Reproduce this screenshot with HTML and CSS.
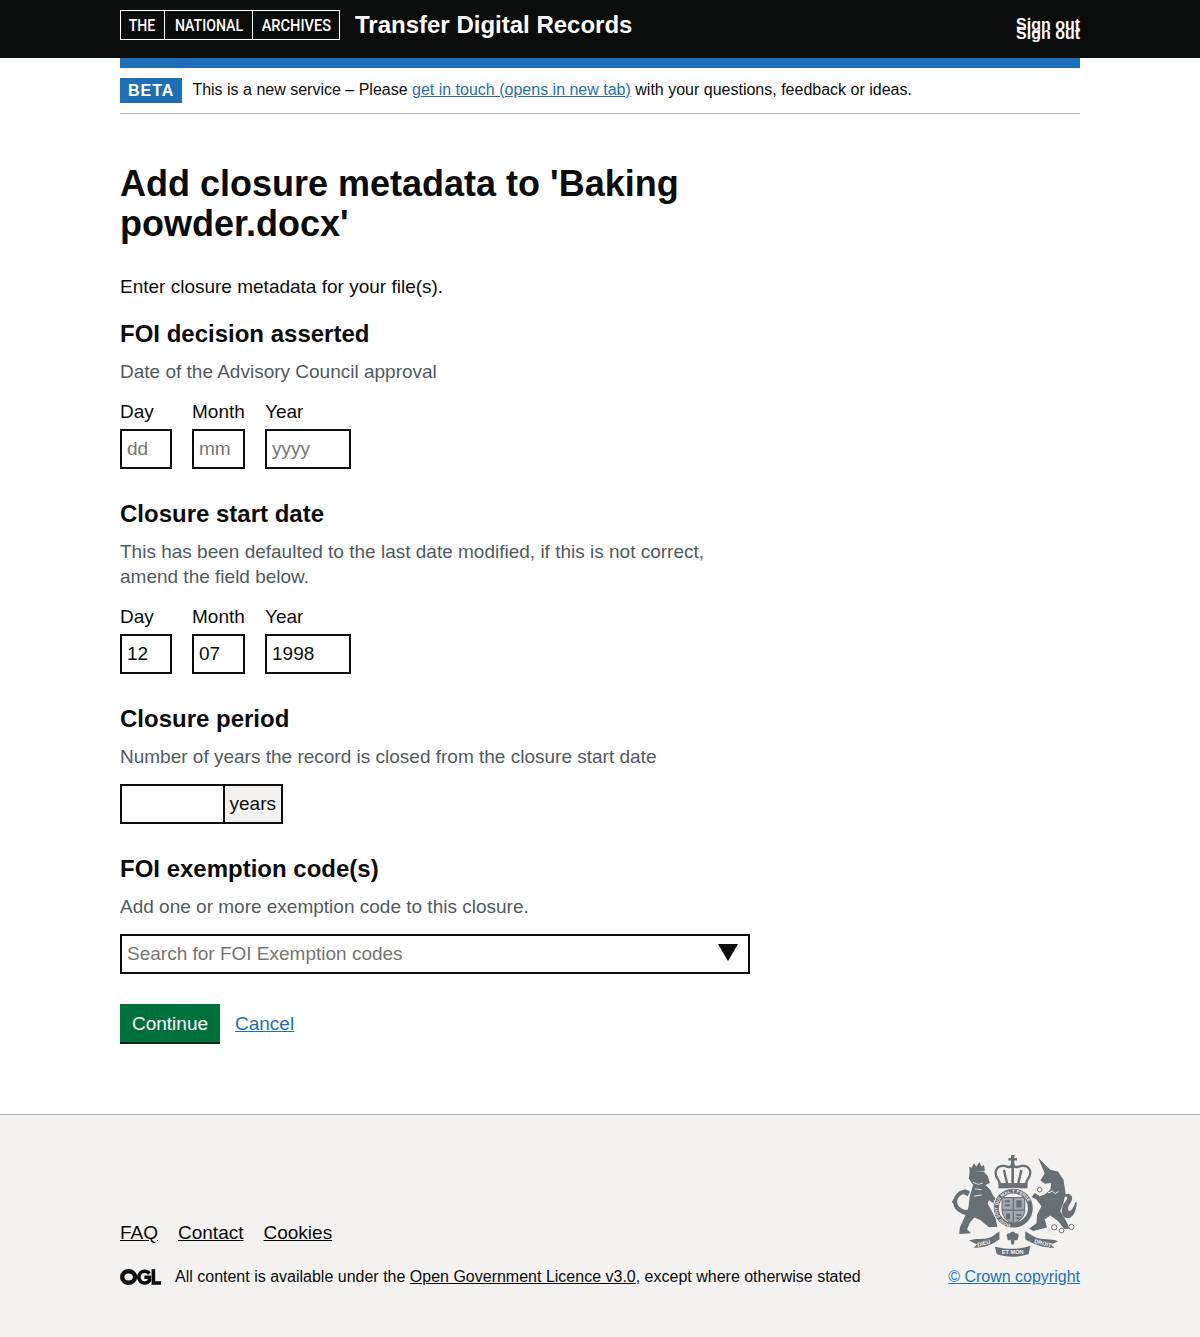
FILE: index.html
```html
<!DOCTYPE html>
<html lang="en">
<head>
<meta charset="utf-8">
<title>Add closure metadata</title>
<link rel="stylesheet" href="styles.css">
</head>
<body>
<header class="site-header">
  <div class="container header-inner">
    <div class="brand">
      <div class="tna-logo">
        <span class="tna-cell tna-the"><span class="tna-word">THE</span></span>
        <span class="tna-cell tna-national"><span class="tna-word">NATIONAL</span></span>
        <span class="tna-cell tna-archives"><span class="tna-word">ARCHIVES</span></span>
      </div>
      <a class="service-name" href="#">Transfer Digital Records</a>
    </div>
    <div class="sign-out">
      <a href="#">Sign out</a>
      <a href="#">Sign out</a>
    </div>
  </div>
</header>
<div class="container">
  <div class="blue-bar"></div>
  <div class="phase-banner">
    <strong class="tag">BETA</strong>
    <span class="phase-text">This is a new service – Please <a class="link" href="#">get in touch (opens in new tab)</a> with your questions, feedback or ideas.</span>
  </div>
  <main class="main">
    <h1 class="title">Add closure metadata to 'Baking powder.docx'</h1>
    <p class="lead">Enter closure metadata for your file(s).</p>
    <section class="group">
      <h2 class="legend">FOI decision asserted</h2>
      <p class="hint">Date of the Advisory Council approval</p>
      <div class="date-row">
        <label class="date-item date-day"><span class="label">Day</span><input class="input" placeholder="dd"></label>
        <label class="date-item date-month"><span class="label">Month</span><input class="input" placeholder="mm"></label>
        <label class="date-item date-year"><span class="label">Year</span><input class="input" placeholder="yyyy"></label>
      </div>
    </section>
    <section class="group">
      <h2 class="legend">Closure start date</h2>
      <p class="hint">This has been defaulted to the last date modified, if this is not correct, amend the field below.</p>
      <div class="date-row">
        <label class="date-item date-day"><span class="label">Day</span><input class="input" value="12"></label>
        <label class="date-item date-month"><span class="label">Month</span><input class="input" value="07"></label>
        <label class="date-item date-year"><span class="label">Year</span><input class="input" value="1998"></label>
      </div>
    </section>
    <section class="group">
      <h2 class="legend">Closure period</h2>
      <p class="hint">Number of years the record is closed from the closure start date</p>
      <div class="suffix-row">
        <input class="input years-input">
        <span class="suffix">years</span>
      </div>
    </section>
    <section class="group">
      <h2 class="legend">FOI exemption code(s)</h2>
      <p class="hint">Add one or more exemption code to this closure.</p>
      <div class="combo">
        <input class="combo-input" placeholder="Search for FOI Exemption codes">
        <svg class="combo-arrow" width="20" height="17" viewBox="0 0 20 17" aria-hidden="true"><path d="M0 0H20L10 17Z"/></svg>
      </div>
    </section>
    <div class="actions">
      <button class="button" type="button">Continue</button>
      <a class="link" href="#">Cancel</a>
    </div>
  </main>
</div>
<footer class="site-footer">
  <div class="container footer-inner">
    <div class="footer-left">
      <nav class="footer-nav">
        <a href="#">FAQ</a>
        <a href="#">Contact</a>
        <a href="#">Cookies</a>
      </nav>
      <div class="licence">
        <svg class="ogl" width="41" height="16" viewBox="0 0 41 16" role="img" aria-label="OGL">
          <ellipse cx="8.6" cy="8" rx="6.4" ry="5.8" fill="none" stroke="#0b0c0c" stroke-width="4.4"/>
          <path d="M29.4 4.6A5.9 5.9 0 1 0 29.4 11.6V8.2H24.4" fill="none" stroke="#0b0c0c" stroke-width="3.6"/>
          <path d="M33.4 .2V14H41" fill="none" stroke="#0b0c0c" stroke-width="3.6"/>
        </svg>
        <span>All content is available under the <a href="#">Open Government Licence v3.0</a>, except where otherwise stated</span>
      </div>
    </div>
    <div class="footer-right">
      <svg class="crest" width="126" height="103" viewBox="62 42 380 312" aria-hidden="true">
        <defs>
          <path id="garter-arc" d="M250 255A48 48 0 1 1 250.1 255"/>
        </defs>
        <g fill="#697074">
          <!-- royal crown -->
          <path d="M243 45h10v9h8v8h-8v10h-10v-10h-8v-8h8z"/>
          <circle cx="248" cy="76" r="7"/>
          <path d="M205 122C188 98 198 76 222 78C232 79 240 86 248 78C256 86 266 79 276 78C300 76 310 98 292 122L286 136H212Z" fill="none" stroke="#697074" stroke-width="7"/>
          <path d="M244 80h8v52h-8zM218 92l7-3 10 44h-7zM278 92l-7-3-10 44h7z"/>
          <path d="M205 130h88v16h-88z"/>
          <!-- lion -->
          <path d="M116 80l7 4 8-14 7 10 9-14 6 14 8-5 3 18-46 5z"/>
          <path d="M118 95H160L172 108L179 130L166 136L180 150L190 170L202 182L192 192L176 182L172 192L180 206L196 236L202 262L176 264L150 242L132 234L118 250L110 270L122 282L86 284L88 264L104 230L114 204L118 170L128 136L115 116Z"/>
          <path d="M114 228C88 226 66 208 68 186C70 166 86 150 102 150L118 158L112 170L100 164C88 166 80 176 80 188C80 202 98 214 118 212Z"/>
          <path d="M68 176l-4 14 10 4zM100 148l18 6-8 14z"/>
          <!-- unicorn -->
          <path d="M325 53L362 90L385 95L402 120L408 160L402 190L392 215L410 245L420 268L405 270L385 245L362 228L345 240L352 265L310 275L298 268L320 252L322 225L335 200L320 180L305 172L315 160L330 170L345 165L362 150L365 130L345 132L332 122L345 100Z"/>
          <path d="M398 172C408 158 426 160 428 174C430 186 416 196 416 208C416 220 428 218 438 188L442 188C442 214 430 240 410 236C394 232 394 208 402 194C408 184 416 178 412 172C408 168 404 172 402 180Z"/>
          <!-- ribbon motto -->
          <path d="M116 304C138 296 162 304 186 292L208 276V300C186 318 158 326 130 326L140 316Z"/>
          <path d="M386 306C364 296 340 304 316 294L286 276V300C314 318 344 326 374 326L364 316Z"/>
          <path d="M194 322C226 332 268 332 302 320L296 346C264 356 230 356 200 346Z"/>
          <!-- thistle -->
          <path d="M240 282c4-6 12-6 16 0 8-2 14 6 8 14 2 6-6 10-10 6l-2 14h-8l-2-14c-6 4-12 0-10-6-6-8 0-16 8-14z"/>
        </g>
        <!-- coronet on the unicorn -->
        <path d="M330 148l10 8 9-4 9 8 10-6 9 8 9-6" fill="none" stroke="#f3f2f1" stroke-width="3"/>
        <path d="M128 128l16 6 14-4M134 148l20 2M130 170l24-4" fill="none" stroke="#f3f2f1" stroke-width="2.5"/>
        <g fill="none" stroke="#697074" stroke-width="3">
          <circle cx="374" cy="264" r="8"/>
          <circle cx="396" cy="274" r="7"/>
          <circle cx="426" cy="263" r="8"/>
          <circle cx="330" cy="150" r="7"/>
        </g>
        <!-- garter and shield -->
        <circle cx="250" cy="206" r="62" fill="#f3f2f1"/>
        <circle cx="250" cy="206" r="59" fill="#697074"/>
        <circle cx="250" cy="206" r="44" fill="#f3f2f1"/>
        <path d="M214 172h72v40c0 22-18 36-36 42-18-6-36-20-36-42z" fill="#697074"/>
        <path d="M217 175h31v35h-31zM252 175h31v35h-31zM217 214h31v36c-14-6-29-16-31-36zM252 214h31c-2 20-17 30-31 36z" fill="#a3a8ab"/>
        <path d="M224 182h16v6h-16zM224 194h16v6h-16zM259 182h16v22h-16zM228 222h12v18h-12zM259 224h16v6h-16zM259 234h10v6h-10z" fill="#697074"/>
        <g fill="#f3f2f1" font-family="'Liberation Sans', Arial, sans-serif">
          <text class="crest-ring"><textPath href="#garter-arc" startOffset="3%">HONI SOIT QUI MAL Y PENSE</textPath></text>
          <g text-anchor="middle">
            <text class="crest-motto" x="162" y="318" transform="rotate(-14 162 318)">DIEU</text>
            <text class="crest-motto" x="248" y="345">ET MON</text>
            <text class="crest-motto" x="338" y="318" transform="rotate(14 338 318)">DROIT</text>
          </g>
        </g>
      </svg>
      <a class="link copyright" href="#">© Crown copyright</a>
    </div>
  </div>
</footer>
</body>
</html>
```
FILE: styles.css
```css
* { box-sizing: border-box; }

html, body {
  margin: 0;
  padding: 0;
  background: #fff;
  color: #0b0c0c;
  font-family: "Liberation Sans", Arial, sans-serif;
}

.container {
  width: 960px;
  margin: 0 auto;
}

/* Header */
.site-header {
  background: #0b0c0c;
  height: 58px;
}

.header-inner {
  display: flex;
  justify-content: space-between;
  align-items: flex-start;
}

.brand {
  display: flex;
  align-items: center;
  padding-top: 10px;
}

.tna-logo {
  display: flex;
  width: 220px;
  height: 30px;
  border: 1px solid #fff;
  color: #fff;
  font-family: Roboto, sans-serif;
  font-size: 17px;
  font-weight: 500;
  line-height: 28px;
  white-space: nowrap;
}

.tna-cell {
  display: flex;
  justify-content: center;
}

.tna-word {
  display: block;
  transform: scaleX(0.83);
}

.tna-the { width: 43px; }
.tna-national { width: 88px; border-left: 1px solid #fff; }
.tna-archives { flex: 1; border-left: 1px solid #fff; }
.tna-archives .tna-word { transform: scaleX(0.86); }

.service-name {
  margin-left: 15px;
  color: #fff;
  font-size: 24px;
  font-weight: 700;
  line-height: 30px;
  text-decoration: none;
}

.sign-out {
  display: flex;
  flex-direction: column;
  align-items: flex-end;
  padding-top: 20px;
}

.sign-out a {
  display: block;
  height: 9px;
  color: #fff;
  font-size: 16px;
  line-height: 9px;
  font-weight: 700;
  text-decoration: none;
}

.blue-bar {
  height: 10px;
  background: #1d70b8;
}

/* Phase banner */
.phase-banner {
  display: flex;
  align-items: center;
  padding: 10px 0;
  border-bottom: 1px solid #b1b4b6;
}

.tag {
  display: block;
  padding: 5px 8px 4px;
  background: #1d70b8;
  color: #fff;
  font-size: 16px;
  font-weight: 700;
  line-height: 16px;
  letter-spacing: 1px;
}

.phase-text {
  margin-left: 10px;
  margin-bottom: 2px;
  font-size: 16px;
  line-height: 20px;
}

.link {
  color: #1d70b8;
  text-decoration: underline;
}

/* Main */
.main {
  width: 630px;
  padding-top: 50px;
  padding-bottom: 70px;
}

.title {
  margin: 0 0 30px;
  font-size: 36px;
  font-weight: 700;
  line-height: 40px;
}

.lead {
  margin: 0 0 20px;
  font-size: 19px;
  line-height: 25px;
}

.group {
  margin-bottom: 30px;
}

.legend {
  margin: 0 0 10px;
  font-size: 24px;
  font-weight: 700;
  line-height: 30px;
}

.hint {
  margin: 0 0 15px;
  color: #505a5f;
  font-size: 19px;
  line-height: 25px;
}

.date-row {
  display: flex;
  gap: 20px;
}

.date-item {
  display: block;
}

.date-day { width: 52px; }
.date-month { width: 53px; }
.date-year { width: 86px; }

.label {
  display: block;
  margin-bottom: 5px;
  font-size: 19px;
  line-height: 25px;
}

.input {
  display: block;
  width: 100%;
  height: 40px;
  margin: 0;
  padding: 5px;
  border: 2px solid #0b0c0c;
  border-radius: 0;
  background: #fff;
  color: #0b0c0c;
  font-family: inherit;
  font-size: 19px;
  line-height: 25px;
}

.input::placeholder,
.combo-input::placeholder {
  color: #757575;
  opacity: 1;
}

.suffix-row {
  display: flex;
}

.years-input {
  width: 105px;
}

.suffix {
  display: block;
  width: 58px;
  height: 40px;
  padding-left: 4.5px;
  border: 2px solid #0b0c0c;
  border-left: 0;
  background: #f3f2f1;
  font-size: 19px;
  line-height: 36px;
}

.combo {
  display: flex;
  align-items: center;
  height: 40px;
  padding-right: 10px;
  border: 2px solid #0b0c0c;
}

.combo-input {
  flex: 1;
  min-width: 0;
  height: 36px;
  padding: 0 5px;
  border: 0;
  outline: 0;
  background: transparent;
  font-family: inherit;
  font-size: 19px;
}

.combo-arrow {
  display: block;
  margin-bottom: 3px;
  fill: #0b0c0c;
}

.actions {
  display: flex;
  align-items: flex-start;
  gap: 15px;
  font-size: 19px;
  line-height: 40px;
}

.button {
  width: 100px;
  height: 38px;
  padding: 0;
  border: 0;
  border-radius: 0;
  background: #00703c;
  box-shadow: 0 2px 0 #002d18;
  color: #fff;
  font-family: inherit;
  font-size: 19px;
  line-height: 25px;
}

/* Footer */
.site-footer {
  border-top: 1px solid #b1b4b6;
  background: #f3f2f1;
  height: 223px;
}

.footer-inner {
  display: flex;
  justify-content: space-between;
  align-items: flex-end;
  padding-top: 39px;
}

.footer-nav {
  display: flex;
  gap: 20px;
  margin-bottom: 22px;
  font-size: 19px;
  line-height: 25px;
}

.footer-nav a,
.licence a {
  color: #0b0c0c;
  text-decoration: underline;
}

.licence {
  display: flex;
  align-items: center;
  font-size: 16px;
  line-height: 20px;
}

.ogl {
  display: block;
  margin-right: 14px;
}

.footer-right {
  display: flex;
  flex-direction: column;
  align-items: center;
}

.crest {
  display: block;
  margin-bottom: 10px;
}

.copyright {
  font-size: 16px;
  line-height: 20px;
}

.crest-ring { font-size: 13px; font-weight: 700; letter-spacing: 0.5px; }
.crest-motto { font-size: 17px; font-weight: 700; }
```
